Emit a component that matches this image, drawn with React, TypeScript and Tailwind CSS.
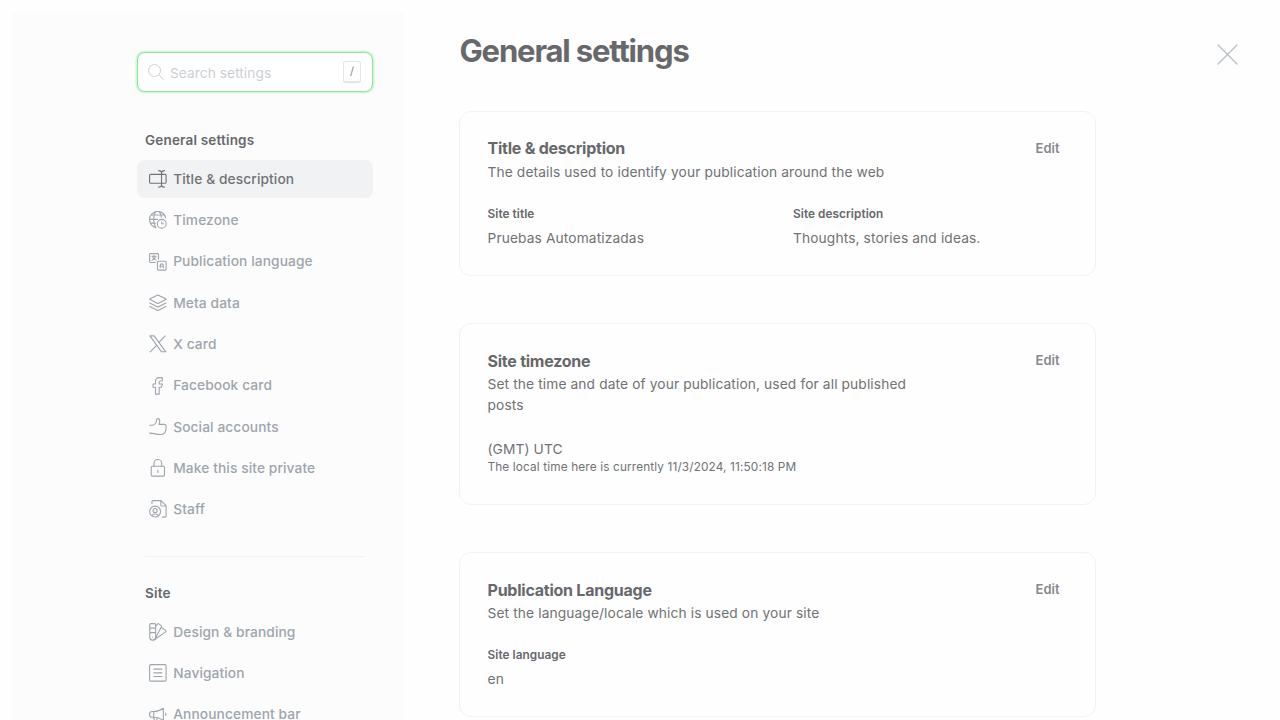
import type { ReactNode } from 'react';

function Icon({ children }: { children: ReactNode }) {
  return (
    <svg
      viewBox="0 0 24 24"
      className="h-[17.7px] w-[17.7px] shrink-0 overflow-visible"
      fill="none"
      stroke="currentColor"
      strokeWidth="1.5"
      strokeLinecap="round"
      strokeLinejoin="round"
    >
      {children}
    </svg>
  );
}

const icons: Record<string, ReactNode> = {
  title: (
    <>
      <path d="M2.300 18A1.500 1.500 0 0 1 .8 16.500V7.500A1.500 1.500 0 0 1 2.300 6H21.700A1.500 1.500 0 0 1 23.200 7.500V16.500A1.500 1.500 0 0 1 21.700 18Z" />
      <path d="M17 3.800V20.200M13 .8C15.500.8 17 2 17 3.800C17 2 18.500.8 21 .8M13 23.200C15.500 23.200 17 22 17 20.200C17 22 18.500 23.200 21 23.200" />
    </>
  ),
  timezone: (
    <>
      <circle cx="17.3" cy="17.3" r="6" />
      <path d="M19.500 17.300H17.300V15" />
      <path d="M8.500 22.200A11 11 0 1 1 22.500 9.200M9.200 22.300C7.500 20 6.400 16 6.400 11.500C6.400 6 8 1.500 10.500.8M13 .8C14.800 1.800 16.200 4.800 16.700 8.500M.8 11.300H11.500M2.700 5.500H20.300M2 16.500H8.500" />
    </>
  ),
  language: (
    <>
      <path d="M8.500 12.800H2A1.200 1.200 0 0 1 .8 11.600V2A1.200 1.200 0 0 1 2 .8H11.600A1.200 1.200 0 0 1 12.800 2V8" />
      <rect x="11.500" y="11.200" width="11.700" height="12" rx="1.200" />
      <path d="M3.800 4.500H9.800M6.800 3.500V4.500M8.800 4.500C8.300 7 6.500 9 4 9.800M4.800 4.500C5.500 7 7 9 9.600 9.800M15.200 20V16.800A2.100 2.100 0 0 1 19.400 16.800V20M15.200 18H19.400" />
    </>
  ),
  meta: (
    <>
      <path d="M12.700 1.600L22.600 6.600A.5.5 0 0 1 22.600 7.600L13 12.500A2.300 2.300 0 0 1 11 12.500L1.400 7.600A.5.5 0 0 1 1.400 6.600L11.300 1.600A1.500 1.500 0 0 1 12.700 1.600Z" />
      <path d="M23 12.200L13 17.200A2.300 2.300 0 0 1 11 17.200L1 12.200" />
      <path d="M23 17L13 22A2.300 2.300 0 0 1 11 22L1 17" />
    </>
  ),
  x: (
    <>
      <path d="M17 22.800L1.200 1.200H7L22.800 22.800Z" />
      <path d="M22 1.200L13.300 10.200M10.500 13.700L1.700 22.800" />
    </>
  ),
  facebook: (
    <path d="M13.800 9.500V7A1.500 1.500 0 0 1 15.300 5.500H18V.8H14A5 5 0 0 0 8.800 6.200V9.500H5.500V14H8.800V23.200H13.800V14H16.800L18.300 9.500Z" />
  ),
  social: (
    <path d="M.8 9.800H4C7 9.800 9.800 7 10.300 3.500V2.300A1.700 1.700 0 0 1 12 .8C13.700.8 14.500 2.500 14.500 4.500C14.500 6 13.900 7.300 13.600 8.700H20.800A2.400 2.400 0 0 1 23.200 11.200C23.200 12.500 22.500 19 21 20.500C19.800 22 17 22.400 14.500 22.400C10 22.400 6.500 20.500 1 20.500" />
  ),
  lock: (
    <>
      <rect x="3" y="9.800" width="18" height="13.500" rx="1.500" />
      <path d="M6.700 9.800V6A5.250 5.250 0 0 1 17.300 6V9.800M12 15V18.200" />
    </>
  ),
  staff: (
    <>
      <circle cx="8.300" cy="15.700" r="7.400" />
      <circle cx="8.300" cy="14.300" r="2.800" />
      <path d="M3.800 21.200C5 18.200 11.600 18.200 12.800 21.200M4 5V2.300A1.500 1.500 0 0 1 5.500.8H16.300L23.200 7.700V21.700A1.500 1.500 0 0 1 21.700 23.200H18M16 .8V6.700A1.500 1.500 0 0 0 17.500 8.200H23.200" />
    </>
  ),
  design: (
    <>
      <path d="M1 2.300A1.500 1.500 0 0 1 2.500.8H7.500A1.500 1.500 0 0 1 9 2.300V19.200A4 4 0 0 1 1 19.200ZM1 7H9M1 13H9" />
      <path d="M9 4.500L11.500 1.500A1.500 1.500 0 0 1 13.500 1.200L16.500 3.600A1.500 1.500 0 0 1 16.800 5.500L8.300 21.500M17.300 6.500L22.500 10A1.500 1.500 0 0 1 22.700 12L7 22.800" />
      <path d="M5 19V19.200" />
    </>
  ),
  navigation: (
    <>
      <rect x=".8" y=".8" width="22.400" height="22.400" rx="1.500" />
      <path d="M6.500 7H17.500M6.500 12H17.500M6.500 17H17.500" />
    </>
  ),
  announcement: (
    <>
      <path d="M6.500 15.300H4.500A3.800 3.800 0 0 1 4.500 7.500H6.500C11 7.500 15.500 6 19.500 3V19.500C15.500 16.800 11 15.300 6.500 15.300ZM6.500 7.500V15.300M22.800 9.500V13" />
      <path d="M6.500 15.300C6.500 18 7.500 20 9 21.500C10 22.500 12 22 11.500 20.500C10.500 19 10.500 17.500 10.800 16" />
    </>
  ),
};

function NavItem({ icon, label, active = false }: { icon: string; label: string; active?: boolean }) {
  return (
    <li
      className={
        active
          ? 'flex h-[37.4px] items-center gap-[7px] rounded-lg bg-[#f1f2f4] pl-[11.500px] text-[#707275]'
          : 'flex h-[37.4px] items-center gap-[7px] pl-[11.500px] text-[#9fa5ad]'
      }
    >
      <Icon>{icons[icon]}</Icon>
      <span className="pt-[0.5px] text-[13.76px] font-medium tracking-[0.1px] whitespace-nowrap">{label}</span>
    </li>
  );
}

function Card({
  title,
  description,
  className,
  children,
}: {
  title: string;
  description: string;
  className: string;
  children: ReactNode;
}) {
  return (
    <section className={`shrink-0 rounded-xl border border-[#f1f2f3] px-[27.500px] pt-[25.3px] ${className}`}>
      <div className="flex items-start justify-between pr-2">
        <div className="w-[424px]">
          <h2 className="text-[16px] leading-[22px] font-bold tracking-[-0.24px]">{title}</h2>
          <p className="mt-[2.600px] text-[13.76px] leading-[20.6px] tracking-[0.12px] text-[#707274]">{description}</p>
        </div>
        <button className="pt-[0.5px] text-[13px] leading-5 font-semibold text-[#86898d]">Edit</button>
      </div>
      {children}
    </section>
  );
}

function Field({ label, value }: { label: string; value: string }) {
  return (
    <div>
      <h3 className="text-[11.8px] leading-[18px] font-semibold tracking-[0.06px]">{label}</h3>
      <p className="mt-[5px] text-[13.76px] leading-5 tracking-[0.12px] text-[#707274]">{value}</p>
    </div>
  );
}

export default function App() {
  return (
    <div className="flex h-screen w-screen overflow-hidden bg-[#fefefe] font-['Inter',sans-serif] text-[#66686b]">
      <aside className="mt-[13px] ml-[11.500px] w-[392px] shrink-0 bg-[#fcfcfc] pt-[39px] pl-[125.500px]">
        <div className="flex h-10 w-[236px] items-center rounded-lg border border-[#8ee59a] bg-white pr-[11px] pl-[10px] shadow-[0_0_0_1.5px_#d0f5d4]">
          <svg viewBox="0 0 24 24" className="h-4 w-4" fill="none" stroke="#ccd2d8" strokeWidth="1.5" strokeLinecap="round">
            <circle cx="9.800" cy="9.800" r="9" />
            <path d="M16.300 16.300L23.200 23.200" />
          </svg>
          <span className="ml-1.5 flex-1 pt-0.5 text-[13.76px] tracking-[0.04px] text-[#ccd0d5]">Search settings</span>
          <kbd className="flex h-[21.500px] w-[18px] items-center justify-center rounded-[3px] border border-b-2 border-[#e2e5e9] bg-white font-['Inter',sans-serif] text-[11px] text-[#85888c]">
            /
          </kbd>
        </div>

        <h2 className="mt-[38px] pl-2 text-[13.5px] leading-5 font-semibold tracking-[0.18px]">General settings</h2>
        <ul className="mt-[10.300px] flex w-[236px] flex-col gap-[3.9px]">
          <NavItem icon="title" label="Title & description" active />
          <NavItem icon="timezone" label="Timezone" />
          <NavItem icon="language" label="Publication language" />
          <NavItem icon="meta" label="Meta data" />
          <NavItem icon="x" label="X card" />
          <NavItem icon="facebook" label="Facebook card" />
          <NavItem icon="social" label="Social accounts" />
          <NavItem icon="lock" label="Make this site private" />
          <NavItem icon="staff" label="Staff" />
        </ul>
        <hr className="mt-[27.700px] ml-[7.500px] w-[220.500px] border-[#eff0f1]" />

        <h2 className="mt-[26px] pl-2 text-[13.5px] leading-5 font-semibold tracking-[0.18px]">Site</h2>
        <ul className="mt-[10.500px] flex w-[236px] flex-col gap-[3.9px]">
          <NavItem icon="design" label="Design & branding" />
          <NavItem icon="navigation" label="Navigation" />
          <NavItem icon="announcement" label="Announcement bar" />
        </ul>
      </aside>

      <main className="flex flex-1 justify-between pl-[55.500px]">
        <div className="flex w-[637px] flex-col">
          <h1 className="mt-[31px] mb-10 pl-[0.500px] text-[31px] leading-10 font-bold tracking-[-1.15px] whitespace-nowrap">
            General settings
          </h1>
          <div className="flex flex-col gap-[47.700px]">
            <Card
              title="Title & description"
              description="The details used to identify your publication around the web"
              className="h-[164.700px]"
            >
              <div className="mt-[22.500px] grid grid-cols-2 gap-x-[31px]">
                <Field label="Site title" value="Pruebas Automatizadas" />
                <Field label="Site description" value="Thoughts, stories and ideas." />
              </div>
            </Card>
            <Card
              title="Site timezone"
              description="Set the time and date of your publication, used for all published posts"
              className="h-[181.300px]"
            >
              <div className="mt-[23.800px]">
                <p className="text-[13.76px] leading-5 tracking-[0.1px] text-[#707274]">(GMT) UTC</p>
                <p className="text-[11.8px] leading-[17px] tracking-[0.14px] text-[#707274]">
                  The local time here is currently 11/3/2024, 11:50:18 PM
                </p>
              </div>
            </Card>
            <Card
              title="Publication Language"
              description="Set the language/locale which is used on your site"
              className="h-[164.700px]"
            >
              <div className="mt-[22.500px]">
                <Field label="Site language" value="en" />
              </div>
            </Card>
          </div>
        </div>
        <button aria-label="Close" className="mt-11 mr-[42px] h-[21px] w-[21px]">
          <svg viewBox="0 0 21 21" className="h-[21px] w-[21px]" fill="none" stroke="#b8bfc6" strokeWidth="1.3" strokeLinecap="round">
            <path d="M1 1L20 20M20 1L1 20" />
          </svg>
        </button>
      </main>
    </div>
  );
}
